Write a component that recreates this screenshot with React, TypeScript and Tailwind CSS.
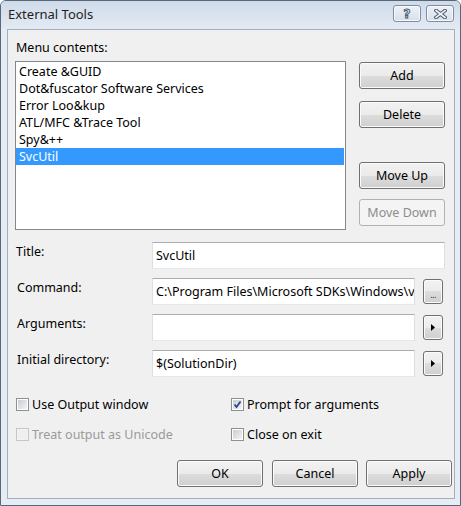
import React from "react";

const btnBase =
  "rounded-[3px] border flex items-center justify-center leading-none";
const btnEnabled =
  "border-[#707070] bg-[linear-gradient(#f2f2f2_0%,#ebebeb_50%,#dddddd_50%,#cfcfcf_100%)] shadow-[inset_0_0_0_1px_#fbfbfb] text-black";
const btnDisabled =
  "border-[#adb2b5] bg-[#f4f4f4] text-[#8d8d8d]";

function Btn({ label, disabled, className }: { label: string; disabled?: boolean; className?: string }) {
  return (
    <div className={`${btnBase} ${disabled ? btnDisabled : btnEnabled} w-[86px] h-[27px] ${className ?? ""}`}>
      <span className="leading-[16px]">{label}</span>
    </div>
  );
}

function SmallBtn({ children }: { children: React.ReactNode }) {
  return (
    <div className={`${btnBase} ${btnEnabled} w-[20px] h-[25px] ml-[8px] mt-[1px]`}>{children}</div>
  );
}

function Arrow() {
  return (
    <svg width="6" height="9" viewBox="0 0 6 9">
      <polygon points="1,1 5,4.5 1,8" fill="#000" />
    </svg>
  );
}

function Input({ value, w }: { value: string; w: string }) {
  return (
    <div
      className={`${w} h-[27px] bg-white border border-[#dbdfe6] border-t-[#abadb3] border-b-[#e3e9ef] flex items-center pl-[3px] overflow-hidden whitespace-nowrap`}
    >
      <span className="leading-[16px] overflow-hidden">{value}</span>
    </div>
  );
}

function Check({ checked, disabled, label }: { checked?: boolean; disabled?: boolean; label: string }) {
  return (
    <div className="flex items-center h-[17px]">
      <div
        className={`w-[13px] h-[13px] border ${disabled ? "border-[#c6c6c6] bg-[#f4f4f4]" : "border-[#8e8f8f] bg-white"} p-[1px] relative`}
      >
        <div
          className={`w-full h-full ${disabled ? "bg-[#efefef]" : "bg-[linear-gradient(135deg,#c9cdd3,#f3f3f3)]"}`}
        />
        {checked && (
          <svg className="absolute left-[1px] top-[1px]" width="9" height="9" viewBox="0 0 9 9">
            <polyline points="1.5,4.5 3.5,7 7.5,1.5" fill="none" stroke="#2b4a8b" strokeWidth="1.8" />
          </svg>
        )}
      </div>
      <span className={`ml-[3px] leading-[16px] ${disabled ? "text-[#9a9a9a]" : "text-black"}`}>{label}</span>
    </div>
  );
}

const items = [
  "Create &GUID",
  "Dot&fuscator Software Services",
  "Error Loo&kup",
  "ATL/MFC &Trace Tool",
  "Spy&++",
  "SvcUtil",
];

export default function App() {
  return (
    <div className="w-[461px] h-[506px] font-['Noto_Sans',sans-serif] text-[12.5px] text-black">
      <div className="w-full h-full flex flex-col border border-[#5a6779] rounded-t-[6px] bg-[#e6ecf3] overflow-hidden">
        {/* Title bar */}
        <div className="h-[28px] shrink-0 flex items-start bg-[linear-gradient(#cfdbea,#e3eaf3)]">
          <div className="pl-[7px] pt-[5px] leading-[16px] text-[#1e1e1e] text-[13px]">External Tools</div>
          <div className="ml-auto mr-[6px] mt-[4px] flex gap-[5px]">
            <div className="w-[28px] h-[17px] rounded-[3px] border border-[#7d8da3] bg-[linear-gradient(#eef2f7,#d6dfea)] shadow-[inset_0_0_0_1px_#f7f9fc] flex items-center justify-center">
              <span className="font-['DejaVu_Sans',sans-serif] font-bold text-[12px] leading-none text-[#f3f5f8] [-webkit-text-stroke:1px_#4b5b70]">
                ?
              </span>
            </div>
            <div className="w-[28px] h-[17px] rounded-[3px] border border-[#7d8da3] bg-[linear-gradient(#eef2f7,#d6dfea)] shadow-[inset_0_0_0_1px_#f7f9fc] flex items-center justify-center">
              <svg width="13" height="10" viewBox="0 0 13 10">
                <path d="M2 1.5 L11 8.5 M11 1.5 L2 8.5" stroke="#4b5b70" strokeWidth="3.6" strokeLinecap="square" />
                <path d="M2 1.5 L11 8.5 M11 1.5 L2 8.5" stroke="#f3f5f8" strokeWidth="1.6" strokeLinecap="square" />
              </svg>
            </div>
          </div>
        </div>

        {/* Client area */}
        <div className="ml-[6px] mr-[5px] h-[470px] shrink-0 border border-[#a3b0c0] bg-[#f0f0f0] flex flex-col pl-[7px] pt-[10px]">
          <div className="ml-[1px] h-[16px] leading-[16px]">Menu contents:</div>

          <div className="mt-[5px] flex">
            <div className="w-[331px] h-[169px] bg-white border border-[#828790] pt-[1px]">
              {items.map((it, i) => (
                <div
                  key={it}
                  className={`h-[17px] leading-[17px] pl-[3px] ${i === 5 ? "bg-[#3399ff] text-white mr-[1px]" : ""}`}
                >
                  {it}
                </div>
              ))}
            </div>
            <div className="ml-[13px] pt-[1px] flex flex-col">
              <Btn label="Add" />
              <Btn label="Delete" className="mt-[12px]" />
              <Btn label="Move Up" className="mt-[34px]" />
              <Btn label="Move Down" disabled className="mt-[10px]" />
            </div>
          </div>

          <div className="mt-[12px] flex flex-col gap-[9px]">
            <div className="flex items-start">
              <div className="w-[137px] pl-[1px] pt-[2px] leading-[16px]">Title:</div>
              <Input value="SvcUtil" w="w-[293px]" />
            </div>
            <div className="flex items-start">
              <div className="w-[137px] pl-[2px] pt-[2px] leading-[16px]">Command:</div>
              <Input value="C:\Program Files\Microsoft SDKs\Windows\v" w="w-[263px]" />
              <SmallBtn>
                <span className="text-[9px] leading-none mt-[6px] text-[#333] tracking-[-0.5px]">...</span>
              </SmallBtn>
            </div>
            <div className="flex items-start">
              <div className="w-[137px] pl-[2px] pt-[2px] leading-[16px]">Arguments:</div>
              <Input value="" w="w-[263px]" />
              <SmallBtn>
                <Arrow />
              </SmallBtn>
            </div>
            <div className="flex items-start">
              <div className="w-[137px] pl-[2px] pt-[2px] leading-[16px]">Initial directory:</div>
              <Input value="$(SolutionDir)" w="w-[263px]" />
              <SmallBtn>
                <Arrow />
              </SmallBtn>
            </div>
          </div>

          <div className="mt-[19px] ml-[1px] grid grid-cols-[215px_1fr] gap-y-[13px]">
            <Check label="Use Output window" />
            <Check label="Prompt for arguments" checked />
            <Check label="Treat output as Unicode" disabled />
            <Check label="Close on exit" />
          </div>

          <div className="mt-[17px] pr-[2px] flex justify-end">
            <Btn label="OK" />
            <Btn label="Cancel" className="ml-[9px]" />
            <Btn label="Apply" className="ml-[8px]" />
          </div>
        </div>
      </div>
    </div>
  );
}
